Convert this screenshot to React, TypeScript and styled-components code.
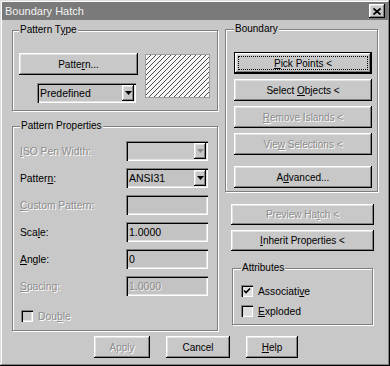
import React from "react";
import styled, { createGlobalStyle, css } from "styled-components";

const FACE = "#c8c8c8";
const FIELD = "#c3c3c3";

const Global = createGlobalStyle`
  html, body { margin: 0; padding: 0; background: ${FACE}; }
  body { font-family: "Liberation Sans", Arial, sans-serif; font-size: 10px; color: #000; }
  * { box-sizing: border-box; }
`;

const raised = css`
  box-shadow: inset -1px -1px #000, inset 1px 1px #fff, inset -2px -2px #808080,
    inset 2px 2px #e2e2e2;
`;
const sunken = css`
  box-shadow: inset 1px 1px #808080, inset 2px 2px #000, inset -1px -1px #fff,
    inset -2px -2px #e2e2e2;
`;

const Window = styled.div`
  width: 390px;
  height: 366px;
  background: ${FACE};
  padding: 2px;
  display: flex;
  flex-direction: column;
  box-shadow: inset -1px -1px #000, inset 1px 1px #dcdcdc, inset -2px -2px #808080,
    inset 2px 2px #fff;
`;

const TitleBar = styled.div`
  height: 18px;
  background: #7a7a7a;
  color: #f2f2f2;
  font-size: 11px;
  display: flex;
  align-items: center;
  justify-content: space-between;
  padding: 0 3px 0 3px;
`;

const CloseBtn = styled.div`
  width: 16px;
  height: 14px;
  background: ${FACE};
  ${raised};
  display: flex;
  align-items: center;
  justify-content: center;
`;

const Main = styled.div`
  display: flex;
  padding-left: 10px;
  gap: 7px;
`;

const Column = styled.div<{ $w: number }>`
  width: ${(p) => p.$w}px;
  display: flex;
  flex-direction: column;
`;

const Group = styled.fieldset<{ $mt: number; $pt: number; $pb: number; $pl: number; $ml?: number; $w?: number }>`
  margin: ${(p) => p.$mt}px 0 0 ${(p) => p.$ml ?? 0}px;
  ${(p) => (p.$w ? `width: ${p.$w}px;` : "")}
  min-width: 0;
  padding: ${(p) => p.$pt}px 0 ${(p) => p.$pb}px ${(p) => p.$pl}px;
  border: 1px solid #808080;
  box-shadow: 1px 1px 0 #fff, inset 1px 1px 0 #fff;
`;

const Legend = styled.legend`
  padding: 0 1px;
  background: ${FACE};
  font-size: 10px;
  line-height: 12px;
`;

const TypeRow = styled.div`
  display: flex;
  gap: 7px;
`;

const Stack = styled.div`
  display: flex;
  flex-direction: column;
  gap: 8px;
`;

const BtnBase = styled.button<{ $w: number; $h?: number; $default?: boolean; $ml?: number }>`
  width: ${(p) => p.$w}px;
  height: ${(p) => p.$h ?? 22}px;
  margin: 0 0 0 ${(p) => p.$ml ?? 0}px;
  padding: 0;
  border: none;
  background: ${FACE};
  font-family: inherit;
  font-size: 10px;
  color: #000;
  display: flex;
  align-items: center;
  justify-content: center;
  flex: none;
  ${raised};
  ${(p) =>
    p.$default &&
    css`
      box-shadow: inset 0 0 0 1px #000, inset -2px -2px #000, inset 2px 2px #fff,
        inset -3px -3px #808080, inset 3px 3px #e2e2e2;
    `}
  &:disabled {
    color: #8c8c8c;
    text-shadow: 1px 1px 0 #fff;
  }
`;

const Focus = styled.span`
  align-self: stretch;
  flex: 1;
  margin: 4px;
  border: 1px dotted #000;
  display: flex;
  align-items: center;
  justify-content: center;
`;

type BtnProps = {
  w: number;
  h?: number;
  ml?: number;
  isDefault?: boolean;
  disabled?: boolean;
  children: React.ReactNode;
};

const Button = ({ w, h, ml, isDefault, disabled, children }: BtnProps) => (
  <BtnBase $w={w} $h={h} $ml={ml} $default={isDefault} disabled={disabled}>
    {isDefault ? (
      <Focus>
        <span>{children}</span>
      </Focus>
    ) : (
      <span>{children}</span>
    )}
  </BtnBase>
);

const Combo = styled.div<{ $w: number; $ml?: number; $off?: boolean }>`
  width: ${(p) => p.$w}px;
  height: 20px;
  margin-left: ${(p) => p.$ml ?? 0}px;
  background: ${(p) => (p.$off ? FACE : FIELD)};
  ${sunken};
  display: flex;
  align-items: center;
  padding: 0 2px 0 3px;
  font-size: 10.5px;
`;

const ComboText = styled.span`
  flex: 1;
`;

const ArrowBtn = styled.div`
  width: 12px;
  height: 16px;
  background: ${FACE};
  ${raised};
  display: flex;
  align-items: center;
  justify-content: center;
`;

const Field = styled.div<{ $off?: boolean }>`
  width: 82px;
  height: 20px;
  background: ${FIELD};
  ${sunken};
  display: flex;
  align-items: center;
  padding-left: 3px;
  font-size: 10.5px;
  color: ${(p) => (p.$off ? "#8c8c8c" : "#000")};
  text-shadow: ${(p) => (p.$off ? "1px 1px 0 #eee" : "none")};
`;

const Swatch = styled.div`
  width: 65px;
  height: 44px;
  margin-top: 1px;
  border: 1px solid #9c9c9c;
  background: #f6f6f6;
  display: flex;
`;

const PropGrid = styled.div`
  display: grid;
  grid-template-columns: 106px 82px;
  grid-auto-rows: 20px;
  row-gap: 7px;
  align-items: center;
`;

const Label = styled.span<{ $off?: boolean }>`
  font-size: 10.3px;
  color: ${(p) => (p.$off ? "#8c8c8c" : "#000")};
  text-shadow: ${(p) => (p.$off ? "1px 1px 0 #fff" : "none")};
`;

const CheckRow = styled.div<{ $mt: number; $ml: number }>`
  display: flex;
  align-items: center;
  gap: 5px;
  margin: ${(p) => p.$mt}px 0 0 ${(p) => p.$ml}px;
  height: 14px;
`;

const Box = styled.div<{ $off?: boolean }>`
  width: 12px;
  height: 12px;
  background: ${(p) => (p.$off ? FACE : "#dedede")};
  ${sunken};
  display: flex;
  align-items: center;
  justify-content: center;
`;

const ButtonList = styled.div`
  display: flex;
  flex-direction: column;
  gap: 5px;
`;

const Spacer = styled.div<{ $h: number }>`
  height: ${(p) => p.$h}px;
  flex: none;
`;

const Footer = styled.div`
  display: flex;
  margin-top: 5px;
  padding-left: 92px;
  gap: 16px;
`;

const Arrow = ({ off }: { off?: boolean }) => (
  <svg width="7" height="4" viewBox="0 0 7 4">
    <path d="M0 0H7L3.5 4Z" fill={off ? "#8c8c8c" : "#000"} />
  </svg>
);

const Check = () => (
  <svg width="8" height="8" viewBox="0 0 8 8">
    <path d="M1 3.5L3 5.5L7 1.5" stroke="#000" strokeWidth="1.6" fill="none" />
  </svg>
);

const Hatch = () => (
  <svg width="63" height="42" viewBox="0 0 63 42">
    <defs>
      <pattern id="h" patternUnits="userSpaceOnUse" width="5" height="5">
        <path d="M-1 6L6 -1M-1 1L1 -1M4 6L6 4" stroke="#3a3a3a" strokeWidth="0.9" />
      </pattern>
    </defs>
    <rect width="63" height="42" fill="url(#h)" />
  </svg>
);

export default function App() {
  return (
    <>
      <Global />
      <Window>
        <TitleBar>
          <span>Boundary Hatch</span>
          <CloseBtn>
            <svg width="8" height="7" viewBox="0 0 8 7">
              <path d="M0.5 0.5L7.5 6.5M7.5 0.5L0.5 6.5" stroke="#000" strokeWidth="1.8" />
            </svg>
          </CloseBtn>
        </TitleBar>
        <Main>
          <Column $w={206}>
            <Group $mt={4} $pt={17} $pb={7} $pl={6}>
              <Legend>
                Pattern T<u>y</u>pe
              </Legend>
              <TypeRow>
                <Stack>
                  <Button w={119}>
                    Patte<u>r</u>n...
                  </Button>
                  <Combo $w={99} $ml={18}>
                    <ComboText>Predefined</ComboText>
                    <ArrowBtn>
                      <Arrow />
                    </ArrowBtn>
                  </Combo>
                </Stack>
                <Swatch>
                  <Hatch />
                </Swatch>
              </TypeRow>
            </Group>
            <Group $mt={9} $pt={9} $pb={7} $pl={7}>
              <Legend>Pattern Properties</Legend>
              <PropGrid>
                <Label $off>
                  <u>I</u>SO Pen Width:
                </Label>
                <Combo $w={82} $off>
                  <ComboText />
                  <ArrowBtn>
                    <Arrow off />
                  </ArrowBtn>
                </Combo>
                <Label>
                  Patter<u>n</u>:
                </Label>
                <Combo $w={82}>
                  <ComboText>ANSI31</ComboText>
                  <ArrowBtn>
                    <Arrow />
                  </ArrowBtn>
                </Combo>
                <Label $off>
                  <u>C</u>ustom Pattern:
                </Label>
                <Field />
                <Label>
                  Sca<u>l</u>e:
                </Label>
                <Field>1.0000</Field>
                <Label>
                  <u>A</u>ngle:
                </Label>
                <Field>0</Field>
                <Label $off>
                  <u>S</u>pacing:
                </Label>
                <Field $off>1.0000</Field>
              </PropGrid>
              <CheckRow $mt={13} $ml={1}>
                <Box $off />
                <Label $off>
                  Dou<u>b</u>le
                </Label>
              </CheckRow>
            </Group>
          </Column>
          <Column $w={153}>
            <Group $mt={3} $pt={17} $pb={3} $pl={8}>
              <Legend>Boundary</Legend>
              <ButtonList>
                <Button w={138} isDefault>
                  <u>P</u>ick Points &lt;
                </Button>
                <Button w={138}>
                  Select <u>O</u>bjects &lt;
                </Button>
                <Button w={138} disabled>
                  <u>R</u>emove Islands &lt;
                </Button>
                <Button w={138} disabled>
                  Vie<u>w</u> Selections &lt;
                </Button>
                <Spacer $h={6} />
              </ButtonList>
              <Button w={138}>
                A<u>d</u>vanced...
              </Button>
            </Group>
            <Spacer $h={12} />
            <ButtonList>
              <Button w={143} h={21} ml={6} disabled>
                Preview Ha<u>t</u>ch &lt;
              </Button>
              <Button w={143} h={21} ml={6}>
                <u>I</u>nherit Properties &lt;
              </Button>
            </ButtonList>
            <Group $mt={11} $pt={10} $pb={6} $pl={8} $ml={7} $w={141}>
              <Legend>Attributes</Legend>
              <CheckRow $mt={0} $ml={0}>
                <Box>
                  <Check />
                </Box>
                <Label>
                  Associati<u>v</u>e
                </Label>
              </CheckRow>
              <CheckRow $mt={6} $ml={0}>
                <Box />
                <Label>
                  <u>E</u>xploded
                </Label>
              </CheckRow>
            </Group>
          </Column>
        </Main>
        <Footer>
          <Button w={56} disabled>
            Apply
          </Button>
          <Button w={64}>Cancel</Button>
          <Button w={52}>
            <u>H</u>elp
          </Button>
        </Footer>
      </Window>
    </>
  );
}
